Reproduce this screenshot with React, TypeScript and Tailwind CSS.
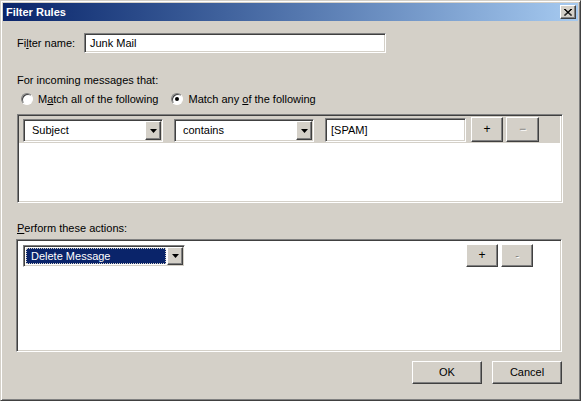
import React from "react";

const raised =
  "border border-t-white border-l-white border-r-[#404040] border-b-[#404040] shadow-[inset_-1px_-1px_#808080,inset_1px_1px_#d4d0c8]";
const sunken =
  "border border-t-[#808080] border-l-[#808080] border-r-white border-b-white shadow-[inset_1px_1px_#404040,inset_-1px_-1px_#d4d0c8]";

function Arrow() {
  return (
    <div className={`${raised} w-[16px] h-full bg-[#d4d0c8] flex items-center justify-center shrink-0`}>
      <svg width="7" height="4" viewBox="0 0 7 4">
        <path d="M0 0h7L3.5 4z" fill="#000" />
      </svg>
    </div>
  );
}

function Select({ label, w, selected }: { label: string; w: string; selected?: boolean }) {
  return (
    <div className={`${sunken} ${w} bg-white flex p-[1px] shrink-0`}>
      <div className="flex-1 flex items-center p-[1px] min-w-0">
        {selected ? (
          <div className="w-full h-full bg-[#0a246a] text-white flex items-center pl-[5px] outline outline-1 outline-dotted outline-[#d4d0c8] -outline-offset-1">
            {label}
          </div>
        ) : (
          <div className="pl-[6px]">{label}</div>
        )}
      </div>
      <Arrow />
    </div>
  );
}

function Btn({ children, w, h, className = "" }: { children: React.ReactNode; w: string; h: string; className?: string }) {
  return (
    <div className={`${raised} ${w} ${h} bg-[#d4d0c8] flex items-center justify-center shrink-0 ${className}`}>
      {children}
    </div>
  );
}

function Radio({ checked }: { checked?: boolean }) {
  return (
    <div className="w-[12px] h-[12px] rounded-full border border-t-[#808080] border-l-[#808080] border-r-white border-b-white bg-white flex items-center justify-center shadow-[inset_1px_1px_#404040] shrink-0">
      {checked && <div className="w-[4px] h-[4px] rounded-full bg-black" />}
    </div>
  );
}

export default function App() {
  return (
    <div
      className="w-[581px] h-[401px] bg-[#d4d0c8] border border-t-[#d4d0c8] border-l-[#d4d0c8] border-r-[#404040] border-b-[#404040] shadow-[inset_1px_1px_white,inset_-1px_-1px_#808080] p-[2px] text-[11px] leading-[13px] text-black overflow-hidden"
      style={{ fontFamily: '"Liberation Sans", Arial, sans-serif' }}
    >
      {/* Title bar */}
      <div className="h-[18px] bg-gradient-to-r from-[#0a246a] to-[#a6caf0] flex items-center justify-between pl-[3px] pr-[2px]">
        <span className="text-white font-bold text-[11px]">Filter Rules</span>
        <Btn w="w-[16px]" h="h-[14px]">
          <svg width="8" height="7" viewBox="0 0 8 7">
            <path d="M0 0L7 6.5M1 0L8 6.5M7 0L0 6.5M8 0L1 6.5" stroke="#000" strokeWidth="1" fill="none" />
          </svg>
        </Btn>
      </div>

      {/* Filter name */}
      <div className="flex items-center mt-[12px] ml-[14px]">
        <div className="w-[67px]">
          Fi<span className="underline">l</span>ter name:
        </div>
        <div className={`${sunken} w-[302px] h-[20px] bg-white flex items-center pl-[5px]`}>Junk Mail</div>
      </div>

      <div className="mt-[21px] ml-[14px]">For incoming messages that:</div>

      <div className="flex items-center mt-[5px] h-[14px]">
        <div className="ml-[18px]">
          <Radio />
        </div>
        <div className="ml-[5px]">
          M<span className="underline">a</span>tch all of the following
        </div>
        <div className="ml-[13px]">
          <Radio checked />
        </div>
        <div className="ml-[5px]">
          Match any <span className="underline">o</span>f the following
        </div>
      </div>

      {/* Rules box */}
      <div className={`${sunken} mt-[8px] ml-[14px] w-[546px] h-[89px] bg-white p-[1px] flex flex-col`}>
        <div className="h-[27px] bg-[#d4d0c8] flex items-end pb-[1px] pl-[4px] border-r border-white">
          <Select label="Subject" w="w-[140px] h-[23px]" />
          <Select label="contains" w="w-[140px] h-[23px] ml-[11px]" />
          <div className={`${sunken} w-[141px] h-[24px] bg-white ml-[11px] flex items-center pl-[5px]`}>[SPAM]</div>
          <Btn w="w-[32px]" h="h-[25px]" className="ml-[5px]">
            <span className="text-[12px]">+</span>
          </Btn>
          <Btn w="w-[33px]" h="h-[25px]" className="ml-[3px]">
            <span className="text-[#808080] text-[12px] [text-shadow:1px_1px_white]">−</span>
          </Btn>
        </div>
      </div>

      <div className="mt-[19px] ml-[14px]">
        <span className="underline">P</span>erform these actions:
      </div>

      {/* Actions box */}
      <div className={`${sunken} mt-[4px] ml-[13px] w-[546px] h-[113px] bg-white p-[1px]`}>
        <div className="flex items-start pl-[5px] pt-[3px]">
          <div className="mt-[1px]">
            <Select label="Delete Message" w="w-[162px] h-[22px]" selected />
          </div>
          <div className="flex-1" />
          <Btn w="w-[32px]" h="h-[23px]">
            <span className="text-[12px]">+</span>
          </Btn>
          <Btn w="w-[32px]" h="h-[23px]" className="ml-[3px] mr-[27px]">
            <span className="text-[#808080] [text-shadow:1px_1px_white]">-</span>
          </Btn>
        </div>
      </div>

      {/* Bottom buttons */}
      <div className="flex justify-end mt-[9px] pr-[16px]">
        <Btn w="w-[70px]" h="h-[23px]">OK</Btn>
        <Btn w="w-[70px]" h="h-[23px]" className="ml-[10px]">Cancel</Btn>
      </div>
    </div>
  );
}
